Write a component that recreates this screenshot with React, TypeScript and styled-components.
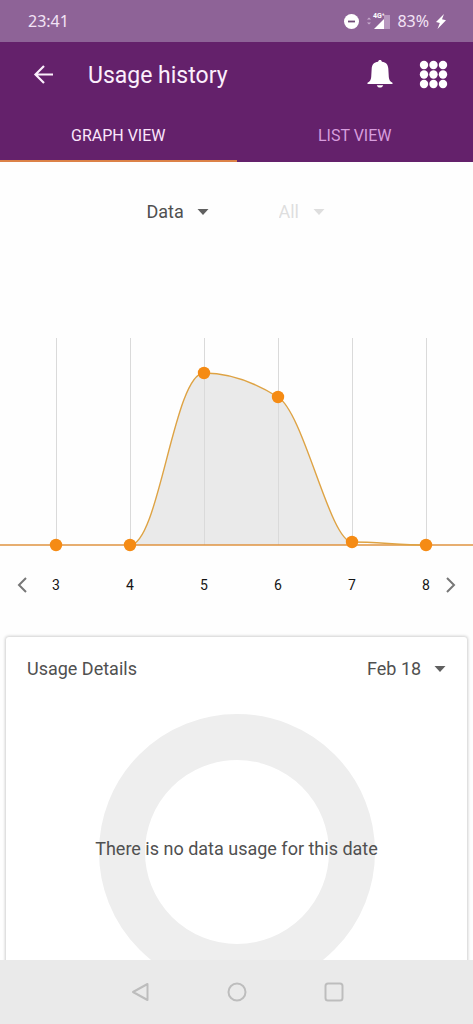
import React, { useState } from "react";
import styled, { createGlobalStyle } from "styled-components";

const GlobalStyle = createGlobalStyle`
  * { box-sizing: border-box; }
  body { margin: 0; background: #fefefe; font-family: Roboto, "Noto Sans", sans-serif; }
  button { padding: 0; border: 0; background: none; color: inherit; font: inherit; cursor: pointer; }
  svg { display: block; }
`;

const Screen = styled.div`
  display: flex;
  flex-direction: column;
  height: 100vh;
  overflow: hidden;
  background: #fefefe;
  color: #505050;
`;

const StatusBar = styled.div`
  display: flex;
  flex: none;
  align-items: center;
  justify-content: space-between;
  height: 42px;
  padding: 0 27px 0 28px;
  background: #8e6397;
  color: #f3e3f6;
  font: 16px/24px "Noto Sans", sans-serif;
`;

const StatusIcons = styled.div`
  display: flex;
  align-items: center;
  gap: 7px;
`;

const Header = styled.header`
  flex: none;
  background: #64216b;
  color: #fbeffc;
`;

const TitleBar = styled.div`
  display: flex;
  align-items: center;
  height: 68px;
  padding: 0 25px 0 32px;
`;

const Title = styled.h1`
  flex: 1;
  margin: 0 0 0 32px;
  font-size: 23px;
  font-weight: 400;
  line-height: 28px;
`;

const Actions = styled.div`
  display: flex;
  align-items: center;
  gap: 26px;
  padding-bottom: 4px;
  color: #fff;
`;

const Tabs = styled.div`
  display: grid;
  grid-template-columns: 1fr 1fr;
`;

const Tab = styled.button<{ $active: boolean }>`
  height: 52px;
  padding-top: 2px;
  border-bottom: 2px solid ${(p) => (p.$active ? "#dc8248" : "#64216b")};
  color: ${(p) => (p.$active ? "#fbe6fc" : "#d79ddd")};
  font-size: 16px;
  line-height: 20px;
`;

const Content = styled.main`
  flex: 1;
  min-height: 0;
  overflow: hidden;
`;

const Filters = styled.div`
  display: flex;
  justify-content: center;
  gap: 70px;
  padding: 38px 2px 0 0;
`;

const Picker = styled.div<{ $width: number; $faded?: boolean }>`
  position: relative;
  width: ${(p) => p.$width}px;
  color: ${(p) => (p.$faded ? "#dedede" : "#505050")};

  svg {
    position: absolute;
    top: 9px;
    right: 0;
    color: ${(p) => (p.$faded ? "#dedede" : "#606060")};
    pointer-events: none;
  }
`;

const Select = styled.select`
  display: block;
  width: 100%;
  height: 24px;
  padding: 0;
  border: 0;
  appearance: none;
  background: none;
  color: inherit;
  font: 18px/24px Roboto, sans-serif;
  opacity: 1;
`;

const Graph = styled.section`
  padding-top: 114px;

  > svg { width: 100%; height: auto; }
`;

const DayRow = styled.div`
  display: flex;
  align-items: center;
  height: 20px;
  margin-top: 23px;
  padding: 0 14px;
  color: #777;
`;

const Days = styled.ol`
  display: flex;
  flex: 1;
  justify-content: space-between;
  margin: 0 13px 0 22px;
  padding: 0;
  list-style: none;
  color: #151515;
  font-size: 14px;
  line-height: 20px;
`;

const Card = styled.section`
  height: 480px;
  margin: 42px 6px 0;
  padding: 20px 21px;
  border-radius: 3px;
  background: #fff;
  box-shadow: 0 0 3px 1px #d0d0d0;
`;

const CardHeader = styled.div`
  display: flex;
  justify-content: space-between;
`;

const CardTitle = styled.h2`
  margin: 0;
  font-size: 18px;
  font-weight: 400;
  line-height: 24px;
`;

const Usage = styled.div`
  display: grid;
  place-items: center;
  margin-top: 33px;

  > * { grid-area: 1 / 1; }
`;

const Ring = styled.div`
  width: 276px;
  height: 276px;
  border: 46px solid #eee;
  border-radius: 50%;
`;

const Message = styled.p`
  margin: 0;
  padding-bottom: 6px;
  font-size: 18px;
  line-height: 24px;
  white-space: nowrap;
`;

const NavBar = styled.nav`
  display: flex;
  flex: none;
  align-items: center;
  justify-content: center;
  gap: 77px;
  height: 64px;
  background: #eaeaea;
  color: #bdbdbd;
`;

const Caret = () => (
  <svg width="12" height="6" viewBox="0 0 12 6" aria-hidden="true">
    <path d="M0.500 0h11L6 6z" fill="currentColor" />
  </svg>
);

const Chevron = ({ right }: { right?: boolean }) => (
  <svg width="16" height="18" viewBox="0 0 16 18" fill="none" stroke="currentColor" strokeWidth="2">
    <path d={right ? "M4 2l7 7-7 7" : "M12 2L5 9l7 7"} />
  </svg>
);

const DAYS = [
  { day: 3, x: 56, y: 207 },
  { day: 4, x: 130, y: 207 },
  { day: 5, x: 204, y: 35 },
  { day: 6, x: 278, y: 59 },
  { day: 7, x: 352, y: 204 },
  { day: 8, x: 426, y: 207 },
];

const CURVE = "M130 207C159 207 174 35 204 35C234 35 262 49 278 59C304 75 330 204 352 204";

const UsageChart = () => (
  <svg viewBox="0 0 473 214" role="img" aria-label="Data usage by day">
    <path d={`${CURVE}V207H130z`} fill="#eaeaea" />
    {DAYS.map((d) => (
      <path key={d.day} d={`M${d.x + 0.5} 0V207`} stroke="#dadada" strokeWidth="1" />
    ))}
    <path d="M0 207H473" stroke="#df9340" strokeWidth="1.6" />
    <path d={`${CURVE}C376 204 401 207 426 207`} fill="none" stroke="#dea344" strokeWidth="1.4" />
    {DAYS.map((d) => (
      <circle key={d.day} cx={d.x} cy={d.y} r="6.2" fill="#f58b14" />
    ))}
  </svg>
);

const dots = [5, 14.5, 24];

export default function App() {
  const [tab, setTab] = useState("graph");
  return (
    <Screen>
      <GlobalStyle />
      <StatusBar>
        <span>23:41</span>
        <StatusIcons>
          <svg width="15" height="15" viewBox="0 0 15 15">
            <circle cx="7.5" cy="7.5" r="7.5" fill="#fff" />
            <path d="M4 7.5h7" stroke="#6f4b77" strokeWidth="1.8" />
          </svg>
          <svg width="24" height="18" viewBox="0 0 24 18">
            <path d="M1 7.500l2-2 2 2zM1 10.500l2 2 2-2z" fill="#c9aecf" />
            <path d="M18 3h6v14h-6z" fill="#b898bf" />
            <path d="M8 17L18 7v10z" fill="#fff" />
            <text x="7" y="6" fill="#fff" fontSize="7" fontWeight="700" fontFamily="Roboto, sans-serif">4G⁺</text>
          </svg>
          <span>83%</span>
          <svg width="10" height="15" viewBox="0 0 10 15">
            <path d="M8 0L0 8l3.800 1L1.500 15 10 6.200 6 5.200z" fill="#fff" />
          </svg>
        </StatusIcons>
      </StatusBar>
      <Header>
        <TitleBar>
          <button aria-label="Back">
            <svg width="24" height="24" viewBox="0 0 24 24" fill="none" stroke="currentColor" strokeWidth="2.200">
              <path d="M21 10.500H4M12 2L3.500 10.500l8.500 8.500" />
            </svg>
          </button>
          <Title>Usage history</Title>
          <Actions>
            <button aria-label="Notifications">
              <svg width="26" height="29" viewBox="0 0 26 29" fill="currentColor">
                <path d="M13 0c-1 0-1.700.7-1.900 1.700C7 2.200 4.900 4.600 4.700 8.500L4.200 17c-.2 2.600-1.200 4.600-3.700 5.700V24h25v-1.300c-2.500-1.100-3.500-3.100-3.700-5.700l-.5-8.500c-.2-3.900-2.300-6.300-6.400-6.800C14.700.7 14 0 13 0zM9.800 25.200h6.400c-.5 1.600-1.600 2.400-3.200 2.400s-2.700-.8-3.200-2.400z" />
              </svg>
            </button>
            <button aria-label="Apps">
              <svg width="29" height="29" viewBox="0 0 29 29" fill="currentColor">
                {dots.map((y) => dots.map((x) => <circle key={`${x}-${y}`} cx={x} cy={y} r="4.200" />))}
              </svg>
            </button>
          </Actions>
        </TitleBar>
        <Tabs role="tablist">
          <Tab role="tab" aria-selected={tab === "graph"} $active={tab === "graph"} onClick={() => setTab("graph")}>
            GRAPH VIEW
          </Tab>
          <Tab role="tab" aria-selected={tab === "list"} $active={tab === "list"} onClick={() => setTab("list")}>
            LIST VIEW
          </Tab>
        </Tabs>
      </Header>
      <Content>
        <Filters>
          <Picker $width={62}>
            <Select aria-label="Usage type"><option>Data</option></Select>
            <Caret />
          </Picker>
          <Picker $width={46} $faded>
            <Select aria-label="Category" disabled><option>All</option></Select>
            <Caret />
          </Picker>
        </Filters>
        <Graph>
          <UsageChart />
          <DayRow>
            <button aria-label="Earlier days"><Chevron /></button>
            <Days>{DAYS.map((d) => <li key={d.day}>{d.day}</li>)}</Days>
            <button aria-label="Later days"><Chevron right /></button>
          </DayRow>
        </Graph>
        <Card>
          <CardHeader>
            <CardTitle>Usage Details</CardTitle>
            <Picker $width={79}>
              <Select aria-label="Date"><option>Feb 18</option></Select>
              <Caret />
            </Picker>
          </CardHeader>
          <Usage>
            <Ring />
            <Message>There is no data usage for this date</Message>
          </Usage>
        </Card>
      </Content>
      <NavBar aria-label="System">
        <button aria-label="Back">
          <svg width="20" height="20" viewBox="0 0 20 20" fill="none" stroke="currentColor" strokeWidth="2" strokeLinejoin="round">
            <path d="M17.500 2v16L3 10z" />
          </svg>
        </button>
        <button aria-label="Home">
          <svg width="20" height="20" viewBox="0 0 20 20" fill="none" stroke="currentColor" strokeWidth="2">
            <circle cx="10" cy="10" r="8.500" />
          </svg>
        </button>
        <button aria-label="Recent apps">
          <svg width="20" height="20" viewBox="0 0 20 20" fill="none" stroke="currentColor" strokeWidth="2">
            <rect x="1.500" y="1.500" width="17" height="17" rx="2.500" />
          </svg>
        </button>
      </NavBar>
    </Screen>
  );
}
